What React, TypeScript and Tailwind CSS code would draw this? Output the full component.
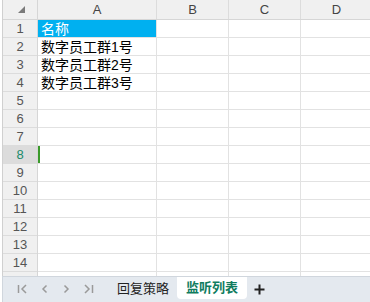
import React from "react";

const rows = ["名称", "数字员工群1号", "数字员工群2号", "数字员工群3号"];
const rowNums = Array.from({ length: 15 }, (_, i) => i + 1);

const font = { fontFamily: '"Liberation Sans", "Noto Sans CJK SC", sans-serif' };

export default function App() {
  return (
    <div className="w-[370px] h-[302px] overflow-hidden bg-white flex flex-col" style={font}>
      <div className="flex-1 overflow-hidden flex">
        {/* row headers */}
        <div className="w-[36px] shrink-0 bg-[#f0f0f0] border-l border-[#d0d0d0] ml-[2px] border-r border-r-[#d6d6d6] flex flex-col">
          <div className="h-[20px] shrink-0 border-b border-[#d6d6d6] flex items-center justify-end pr-[12px]">
            <svg width="7" height="7" viewBox="0 0 7 7">
              <polygon points="7,0 7,7 0,7" fill="#7a7a7a" />
            </svg>
          </div>
          {rowNums.map((n) => (
            <div
              key={n}
              className={`h-[18px] shrink-0 border-b border-[#dcdcdc] flex items-center justify-center text-[13px] ${
                n === 8 ? "bg-[#dcdcdc] text-[#1a8a6a]" : "text-[#555]"
              }`}
            >
              {n}
            </div>
          ))}
        </div>
        {/* columns */}
        <div className="flex-1 flex flex-col overflow-hidden">
          <div className="h-[20px] shrink-0 bg-[#f0f0f0] border-b border-[#d6d6d6] flex text-[13px] text-[#444]">
            <div className="w-[119px] shrink-0 border-r border-[#dcdcdc] flex items-center justify-center">A</div>
            <div className="w-[72px] shrink-0 border-r border-[#dcdcdc] flex items-center justify-center">B</div>
            <div className="w-[72px] shrink-0 border-r border-[#dcdcdc] flex items-center justify-center">C</div>
            <div className="w-[72px] shrink-0 border-r border-[#dcdcdc] flex items-center justify-center">D</div>
          </div>
          {rowNums.map((n) => (
            <div key={n} className="h-[18px] shrink-0 border-b border-[#e2e2e2] flex">
              <div
                className={`w-[119px] shrink-0 border-r border-[#e2e2e2] flex items-center pl-[3px] text-[14px] leading-none relative ${
                  n === 1 ? "bg-[#00b0f0] text-white" : "text-black"
                }`}
              >
                {n === 8 && <div className="absolute left-0 top-0 bottom-0 w-[2px] bg-[#3a9a2a]" />}
                {rows[n - 1] ?? ""}
              </div>
              <div className="w-[72px] shrink-0 border-r border-[#e2e2e2]" />
              <div className="w-[72px] shrink-0 border-r border-[#e2e2e2]" />
              <div className="w-[72px] shrink-0 border-r border-[#e2e2e2]" />
            </div>
          ))}
        </div>
      </div>
      {/* sheet tabs */}
      <div className="h-[26px] shrink-0 ml-[2px] border-l border-t border-[#d0d6dd] bg-[#e4e9ef] flex items-start">
        <div className="flex items-center h-[24px] gap-[11px] pl-[14px] text-[#9a9a9a]">
          <svg width="11" height="12" viewBox="0 0 11 12" fill="none" stroke="currentColor" strokeWidth="1.5">
            <path d="M1.5 2v8M9 2L5 6l4 4" />
          </svg>
          <svg width="11" height="12" viewBox="0 0 11 12" fill="none" stroke="currentColor" strokeWidth="1.5">
            <path d="M7.5 2.5L4 6l3.5 3.5" />
          </svg>
          <svg width="11" height="12" viewBox="0 0 11 12" fill="none" stroke="currentColor" strokeWidth="1.5">
            <path d="M3.5 2.5L7 6l-3.5 3.5" />
          </svg>
          <svg width="11" height="12" viewBox="0 0 11 12" fill="none" stroke="currentColor" strokeWidth="1.5">
            <path d="M2 2l4 4-4 4M9.5 2v8" />
          </svg>
        </div>
        <div className="ml-[23px] h-[24px] flex items-center text-[13px] text-[#222]">回复策略</div>
        <div className="ml-[8px] w-[70px] h-[22px] bg-white rounded-b-[4px] flex items-center justify-center text-[13px] font-bold text-[#107c5e]">
          监听列表
        </div>
        <div className="ml-[7px] h-[24px] flex items-center text-[#222]">
          <svg width="11" height="11" viewBox="0 0 11 11" stroke="currentColor" strokeWidth="2">
            <path d="M5.5 0.5v10M0.5 5.5h10" />
          </svg>
        </div>
      </div>
    </div>
  );
}
